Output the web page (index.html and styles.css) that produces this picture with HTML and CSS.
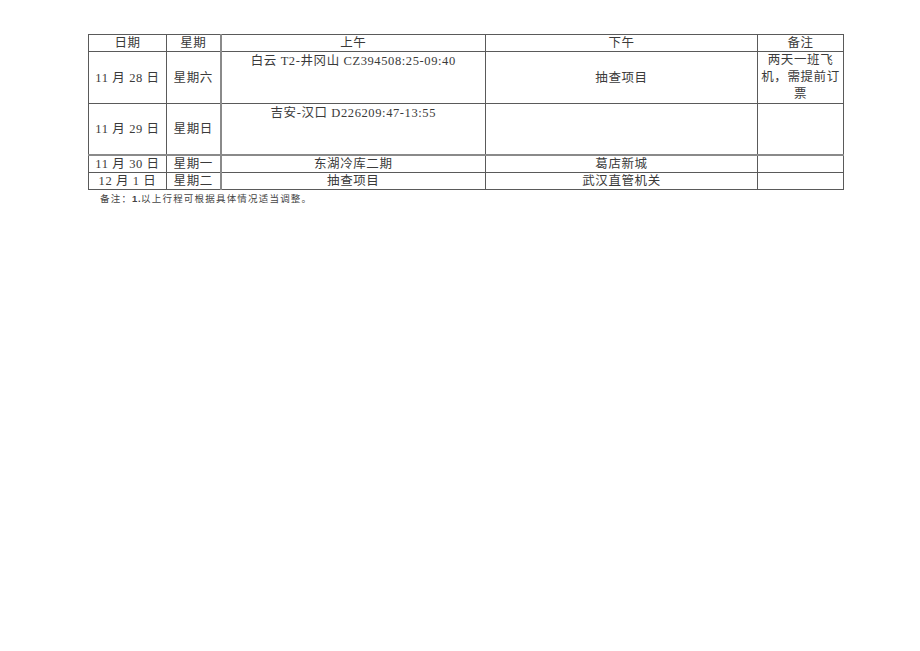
FILE: index.html
```html
<!DOCTYPE html>
<html lang="zh-CN">
<head>
<meta charset="utf-8">
<title>行程安排</title>
<link rel="stylesheet" href="styles.css">
</head>
<body>
<div class="page">
  <table class="schedule">
    <colgroup>
      <col class="c-date">
      <col class="c-week">
      <col class="c-am">
      <col class="c-pm">
      <col class="c-note">
    </colgroup>
    <thead>
      <tr class="r-head">
        <th>日期</th>
        <th class="wk">星期</th>
        <th>上午</th>
        <th>下午</th>
        <th>备注</th>
      </tr>
    </thead>
    <tbody>
      <tr class="r-tall">
        <td>11 月 28 日</td>
        <td class="wk">星期六</td>
        <td class="top">白云 T2-井冈山 CZ394508:25-09:40</td>
        <td>抽查项目</td>
        <td class="remark">两天一班飞<br>机，需提前订<br>票</td>
      </tr>
      <tr class="r-tall r-sep">
        <td>11 月 29 日</td>
        <td class="wk">星期日</td>
        <td class="top">吉安-汉口 D226209:47-13:55</td>
        <td></td>
        <td></td>
      </tr>
      <tr class="r-short">
        <td>11 月 30 日</td>
        <td class="wk">星期一</td>
        <td>东湖冷库二期</td>
        <td>葛店新城</td>
        <td></td>
      </tr>
      <tr class="r-short r-last">
        <td>12 月 1 日</td>
        <td class="wk">星期二</td>
        <td>抽查项目</td>
        <td>武汉直管机关</td>
        <td></td>
      </tr>
    </tbody>
  </table>
  <p class="footnote">备注：<span class="num">1.</span>以上行程可根据具体情况适当调整。</p>
</div>
</body>
</html>
```

FILE: styles.css
```css
html, body {
  margin: 0;
  padding: 0;
  background: #ffffff;
}

.page {
  padding: 34px 0 0 88px;
  font-family: "Liberation Serif", "Noto Sans CJK SC", serif;
  color: #3a3a3a;
}

.schedule {
  border-collapse: collapse;
  table-layout: fixed;
  width: 755px;
  font-size: 12.5px;
  letter-spacing: 0.6px;
  line-height: 16px;
}

.c-date { width: 78px; }
.c-week { width: 54px; }
.c-am   { width: 265px; }
.c-pm   { width: 272px; }
.c-note { width: 86px; }

.schedule th,
.schedule td {
  border: 1px solid #5a5a5a;
  padding: 0 2px;
  text-align: center;
  vertical-align: middle;
  font-weight: normal;
  white-space: nowrap;
  overflow: hidden;
}

.schedule .wk {
  border-right: 2px solid #8a8a8a;
}

.r-head th { height: 15px; }
.r-tall td { height: 49px; }
.r-short td { height: 16px; }
.r-last td { height: 15px; }

.r-sep td {
  border-bottom: 2px solid #8a8a8a;
}

.schedule td.top {
  vertical-align: top;
  padding-top: 1px;
}

.schedule td.remark {
  line-height: 17px;
  white-space: normal;
}

.footnote {
  margin: 1px 0 0 12px;
  font-family: "Noto Sans CJK SC", sans-serif;
  font-size: 9.5px;
  letter-spacing: 1.2px;
  line-height: 14px;
  color: #444444;
}

.footnote .num {
  font-family: "Liberation Sans", sans-serif;
  font-weight: bold;
  letter-spacing: 0.5px;
}
```
